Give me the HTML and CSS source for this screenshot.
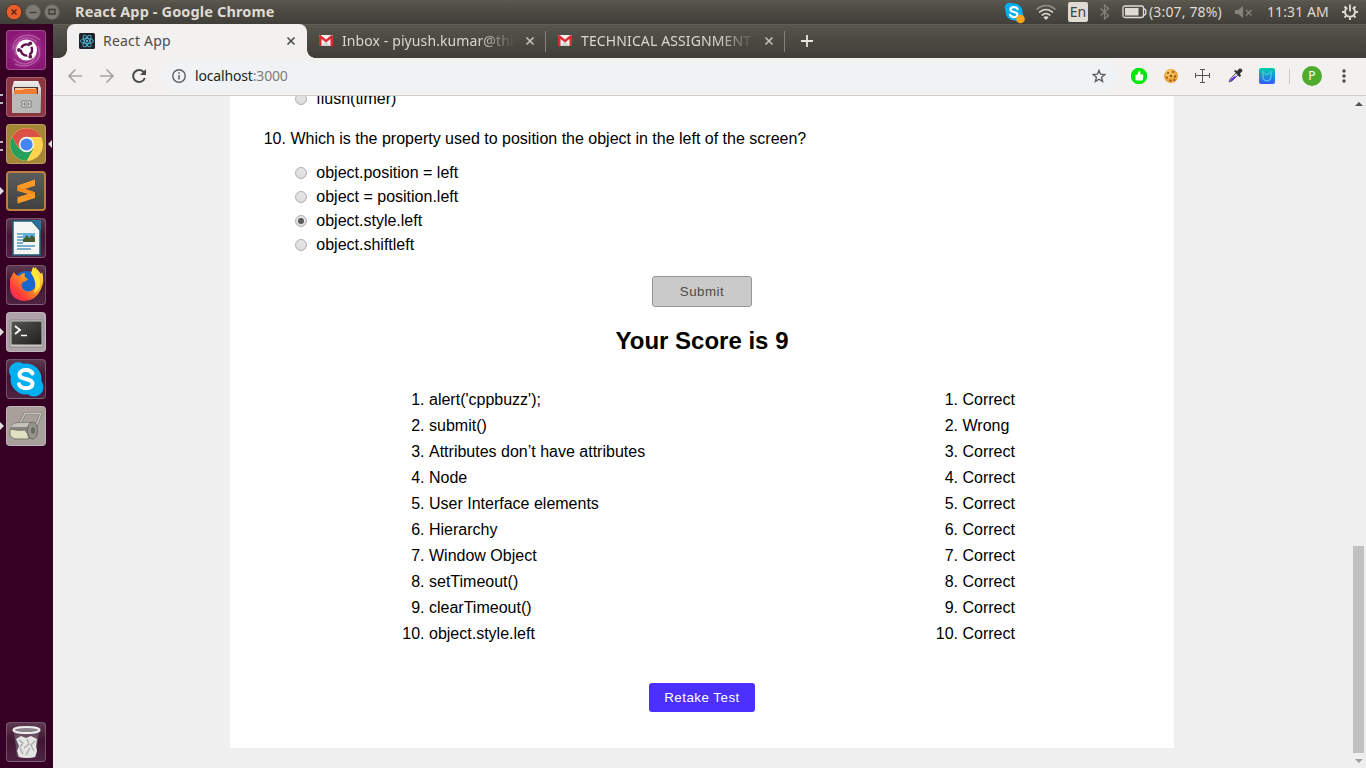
FILE: index.html
```html
<!DOCTYPE html>
<html lang="en">
<head>
<meta charset="utf-8">
<title>React App</title>
<link rel="stylesheet" href="styles.css">
</head>
<body>
<svg width="0" height="0" class="defs">
  <defs>
    <linearGradient id="metal" x1="0" y1="0" x2="0" y2="1"><stop offset="0" stop-color="#efefed"/><stop offset="1" stop-color="#8e8e8b"/></linearGradient>
    <linearGradient id="screen" x1="0" y1="0" x2="1" y2="1"><stop offset="0" stop-color="#555552"/><stop offset="1" stop-color="#1f1f1e"/></linearGradient>
    <linearGradient id="fox" x1="1" y1="0" x2="0" y2="1"><stop offset="0" stop-color="#fff14a"/><stop offset=".4" stop-color="#ffa31f"/><stop offset=".75" stop-color="#ff3b3c"/><stop offset="1" stop-color="#e5236b"/></linearGradient>
    <linearGradient id="mug" x1="0" y1="0" x2="0" y2="1"><stop offset="0" stop-color="#00d0a8"/><stop offset="1" stop-color="#3a58ff"/></linearGradient>
    <symbol id="gmail" viewBox="0 0 14 12"><path fill="#f0eeee" d="M0 0h14v11H0z"/><path fill="#d5d2d2" d="M3 11 7 6l4 5z"/><path fill="#d92b30" d="M0 1Q0 0 1.500 0L7 4.500 12.500 0Q14 0 14 1v10h-2.500V4L7 7.600 2.500 4v7H0z"/></symbol>
    <symbol id="cross" viewBox="0 0 10 10"><path d="M1.500 1.500l7 7M8.500 1.500l-7 7" stroke="currentColor" stroke-width="1.600" fill="none"/></symbol>
    <symbol id="skype" viewBox="0 0 40 40"><circle cx="12" cy="12" r="9" fill="#00aff0"/><circle cx="28" cy="28" r="9.500" fill="#00aff0"/><circle cx="20" cy="20" r="15.500" fill="#00aff0"/><path d="M26.500 14.500C24 9.500 13.500 10 13.500 15.500c0 6 13 3 13 9.300 0 5.700-11.500 6-13.500 .4" fill="none" stroke="#fff" stroke-width="4" stroke-linecap="round"/></symbol>
  </defs>
</svg>

<div class="panel">
  <div class="winbtns">
    <svg width="18" height="18" viewBox="0 0 18 18"><circle cx="9" cy="9" r="7.800" fill="#e9602d" stroke="#51332a"/><path d="M6.500 6.500l5 5m0-5-5 5" stroke="#5c2716" stroke-width="1.500"/></svg>
    <svg width="18" height="18" viewBox="0 0 18 18"><circle cx="9" cy="9" r="7.500" fill="#7c7a73" stroke="#5f5d56"/><path d="M5.500 9.500h7" stroke="#3d3c36" stroke-width="1.300"/></svg>
    <svg width="18" height="18" viewBox="0 0 18 18"><circle cx="9" cy="9" r="7.500" fill="#7c7a73" stroke="#5f5d56"/><path d="M6 6.500h6v4.500H6z" fill="none" stroke="#3d3c36" stroke-width="1.300"/></svg>
  </div>
  <div class="wintitle">React App - Google Chrome</div>
  <div class="indicators">
    <svg class="i-skype" width="22" height="24" viewBox="0 0 22 24"><use href="#skype" x="0" y="1" width="22" height="22"/><circle cx="17.500" cy="19" r="4.300" fill="#fba51a"/></svg>
    <svg class="i-wifi" width="22" height="18" viewBox="0 0 22 18" fill="none" stroke-width="1.600"><path d="M1.500 6.500Q11-1.500 20.500 6.500" stroke="#96928a"/><path d="M4 9.500Q11 3.500 18 9.500M6.700 12.500Q11 8.500 15.300 12.500" stroke="#dfdbd2"/><path d="M8.300 14.200Q11 12.300 13.700 14.200L11 17z" fill="#dfdbd2"/></svg>
    <span class="i-lang">En</span>
    <svg class="i-bt" width="11" height="16" viewBox="0 0 11 16"><path d="M1.500 4.500l8 7-4 3.500V1l4 3.500-8 7" fill="none" stroke="#85827a" stroke-width="1.300"/></svg>
    <svg class="i-batt" width="25" height="14" viewBox="0 0 25 14"><rect x="1" y="1" width="20.500" height="11.500" rx="2" fill="none" stroke="#dfdbd2" stroke-width="1.300"/><path fill="#dfdbd2" d="M3 3h13.500v7.500H3z"/><path d="M22 4q2 0 2 3t-2 3" fill="none" stroke="#dfdbd2" stroke-width="1.300"/></svg>
    <span class="i-charge">(3:07, 78%)</span>
    <svg class="i-vol" width="18" height="12" viewBox="0 0 18 12"><path d="M0 4h3l5-4v12L3 8H0z" fill="#85827a"/><path d="M11 4l5.500 5.500m0-5.500L11 9.500" stroke="#85827a" stroke-width="1.400"/></svg>
    <span class="i-clock">11:31 AM</span>
    <svg class="i-gear" width="18" height="18" viewBox="0 0 18 18" fill="none" stroke="#dfdbd2"><path d="M6.300 4.600a5 5 0 1 0 5.400 0" stroke-width="1.900"/><path d="M9 1.500v7" stroke-width="1.800"/><path d="M14.500 9h2.500M1 9h2.500M9 14.500V17M12.900 12.900l1.600 1.600M5.100 12.900l-1.600 1.600M13 5l1.500-1.500M5 5 3.500 3.500" stroke-width="2"/></svg>
  </div>
</div>

<div class="desktop">
  <div class="launcher">
    <div class="tile dash"><svg viewBox="0 0 40 40"><g fill="none" stroke="#cf8cc6" stroke-width="1.500" opacity=".5"><path d="M7 20C6 5 25 1 34 10M32 16c6 14-8 24-23 18M10 25C5 12 19 2 31 12M30 24c-2 11-14 13-22 5"/></g><circle cx="20.500" cy="20" r="10.500" fill="#fff"/><circle cx="20.500" cy="20" r="5.600" fill="none" stroke="#631454" stroke-width="2.400" stroke-dasharray="9.700 2" stroke-dashoffset="4"/><g fill="#631454"><circle cx="12.900" cy="20" r="1.900"/><circle cx="24.300" cy="13.300" r="1.900"/><circle cx="24.300" cy="26.700" r="1.900"/></g></svg></div>
    <div class="tile files two"><svg viewBox="0 0 40 40"><path d="M8 4h24l3 7v24q0 1-1 1H7q-1 0-1-1V11z" fill="url(#metal)"/><path d="M8 10h24v8H8z" fill="#4d3630"/><path d="M9 11h21v2H9z" fill="#f6c899"/><path d="M8 13h9l1-1h13v5H8z" fill="#f17d32"/><path d="M6 17h28v19H6z" fill="#b9b9b7"/><path d="M16 24h9v6h-9z" fill="#eee" stroke="#777" stroke-width="1"/><path d="M18 26h5v2h-5z" fill="none" stroke="#666"/></svg></div>
    <div class="tile chrome two active"><svg viewBox="0 0 40 40"><circle cx="20.500" cy="20.500" r="16.500" fill="#ffd34b"/><path d="M6 13A16.500 16.500 0 0 0 20.500 37l7-12.500H13z" fill="#26a05b"/><path d="M6 13A16.500 16.500 0 0 1 35.200 13H20.500L13.500 24.500z" fill="#dc5147"/><circle cx="20.500" cy="20.500" r="7.700" fill="#f4f4f4"/><circle cx="20.500" cy="20.500" r="6.100" fill="#4285f4"/></svg></div>
    <div class="tile sublime one"><svg viewBox="0 0 40 40"><path d="M11.500 14.500 29 8.500v6.200L18.500 18 29 21.300V27l-17.500 5.500v-6.200L22 23l-10.500-3.200z" fill="#ff9a25"/><path d="M11.500 19.800v-4.500L29 21.300V24z" fill="#f58d1b"/></svg></div>
    <div class="tile writer"><svg viewBox="0 0 40 40"><path d="M7 3h19l8 9v25H7z" fill="#f5f5f3" stroke="#20617e" stroke-width="1.500"/><path d="M25 2h10v10z" fill="#2e749a"/><path d="M11 16h6m-6 3h6m-6 3h6m-6 3h6m-6 3h18m-18 3h14" stroke="#5299c0" stroke-width="1.500"/><path d="M17 15h12v9H17z" fill="#62b1dc"/><path d="m17 22 4-5 2 3 3-3 3 3v4H17z" fill="#435c31"/></svg></div>
    <div class="tile firefox"><svg viewBox="0 0 40 40"><circle cx="20.500" cy="20" r="14" fill="#1667ce"/><path d="M4 14q2-4 4-7 2 4 5 4 3-3 6-3-2 4 3 6-2 3-5 3-3 3 0 7 5 5 11 0 5-7-1-16l2-6q4 4 6 7l1-2q3 9-1 17-5 12-17 12Q5 35 4 23z" fill="url(#fox)"/><path d="M25 8l2-6q4 3 5 7 6 14-4 19 4-10-3-20z" fill="#ffe63a"/></svg></div>
    <div class="tile terminal one"><svg viewBox="0 0 40 40"><path d="M4 8h33v27H4z" fill="#c9c8c5" stroke="#8d8b88"/><path d="M5.500 9.500h30v23h-30z" fill="url(#screen)"/><path d="m9 14 5 4-5 4" fill="none" stroke="#fff" stroke-width="1.800"/><path d="M15 23.500h6" stroke="#fff" stroke-width="1.500"/></svg></div>
    <div class="tile skype"><svg viewBox="0 0 40 40"><use href="#skype" width="40" height="40"/></svg></div>
    <div class="tile usb one"><svg viewBox="0 0 40 40"><path d="M14 17 19 7.500h16L28 25" fill="none" stroke="#84837a" stroke-width="3.200" stroke-linejoin="round"/><path d="M14 17 19 7.500h16L28 25" fill="none" stroke="#c9c7bd" stroke-width="1.400" stroke-linejoin="round"/><path d="M4 23q1-6 8-7h15v17H10z" fill="#85857d"/><path d="M5 21q2-4 8-4h13v4H10z" fill="#c3c3bb"/><ellipse cx="26.500" cy="24.500" rx="5" ry="8.500" fill="#96968e" stroke="#686861"/><ellipse cx="27" cy="24.500" rx="2" ry="3.300" fill="#686861"/><path d="M4 23q8 2 15 1 3 3 4 9H9q-4-1-5-4z" fill="#dfe0c2" stroke="#77776a"/></svg></div>
    <div class="tile trash"><svg viewBox="0 0 40 40"><path d="M8 9h25l-3 26q-10 2-19 0z" fill="#776c78" opacity=".65"/><path d="m10 17 5-3 5 2 5-2 6 3-1 7 1 5-2 6q-8 2-16 0l-2-6 2-5z" fill="#e5e5e5"/><path d="m13 18 4 3-3 4m7-8 2 5-5 4m11-7-4 4 3 6m-14-3 3 6m7-6-4 7" fill="none" stroke="#aaa" stroke-width="1.300"/><ellipse cx="20.500" cy="8" rx="13" ry="3" fill="#8b818d" stroke="#eee" stroke-width="2"/></svg></div>
  </div>

  <div class="browser">
    <div class="tabs">
      <div class="tab current">
        <svg class="fav" width="16" height="16" viewBox="0 0 16 16"><rect width="16" height="16" rx="1.500" fill="#20232a"/><g fill="none" stroke="#4fb8d5" stroke-width=".9"><ellipse cx="8" cy="8" rx="6.500" ry="2.500"/><ellipse cx="8" cy="8" rx="6.500" ry="2.500" transform="rotate(60 8 8)"/><ellipse cx="8" cy="8" rx="6.500" ry="2.500" transform="rotate(120 8 8)"/></g><circle cx="8" cy="8" r="1.200" fill="#4fb8d5"/></svg>
        <span class="name">React App</span>
        <svg class="x" width="10" height="10"><use href="#cross"/></svg>
      </div>
      <div class="tab">
        <svg class="fav" width="14" height="12"><use href="#gmail"/></svg>
        <span class="name inbox">Inbox - piyush.kumar@thi</span>
        <svg class="x" width="10" height="10"><use href="#cross"/></svg>
      </div>
      <div class="tab second">
        <svg class="fav" width="14" height="12"><use href="#gmail"/></svg>
        <span class="name tech">TECHNICAL ASSIGNMENT_</span>
        <svg class="x" width="10" height="10"><use href="#cross"/></svg>
      </div>
      <svg class="plus" width="12" height="12" viewBox="0 0 12 12"><path d="M6 0v12M0 6h12" stroke="#e8e5de" stroke-width="1.800"/></svg>
    </div>
    <div class="toolbar">
      <svg class="nav" width="16" height="16" viewBox="0 0 16 16"><path d="M15 8H2m6.500-6.500L2 8l6.500 6.500" fill="none" stroke="#a5a4a2" stroke-width="1.700"/></svg>
      <svg class="nav" width="16" height="16" viewBox="0 0 16 16"><path d="M1 8h13M7.500 1.500 14 8l-6.500 6.500" fill="none" stroke="#a5a4a2" stroke-width="1.700"/></svg>
      <svg class="nav" width="16" height="16" viewBox="0 0 16 16"><path d="M13 4.500A6 6 0 1 0 13.800 10" fill="none" stroke="#4b4b4b" stroke-width="2"/><path d="M15 1v6H9z" fill="#4b4b4b"/></svg>
      <div class="omnibox">
        <svg width="14" height="14" viewBox="0 0 14 14"><circle cx="7" cy="7" r="6.200" fill="none" stroke="#5b5f63" stroke-width="1.400"/><path d="M7 6v4.500M7 3.300v1.500" stroke="#5b5f63" stroke-width="1.500"/></svg>
        <span class="url">localhost<span>:3000</span></span>
        <svg class="star" width="14" height="14" viewBox="0 0 14 14"><path d="M7 1.400 8.600 5.200l4.200.4-3.200 2.700 1 4.100L7 10.200 3.400 12.400l1-4.100L1.200 5.600l4.200-.4z" fill="none" stroke="#5b5f63" stroke-width="1.400"/></svg>
      </div>
      <div class="exts">
        <svg width="16" height="16" viewBox="0 0 16 16"><circle cx="8" cy="8" r="8.200" fill="#00e60b"/><path d="M4.500 7H6l2-4q2 0 1.200 3.200h2.600q1 1-.2 6.300H6L4.500 12z" fill="#fff"/></svg>
        <svg width="16" height="16" viewBox="0 0 16 16"><circle cx="8" cy="8" r="7" fill="#eaa139"/><circle cx="7" cy="6" r="4.500" fill="#f5be59"/><g fill="#86501e"><circle cx="5" cy="5" r="1"/><circle cx="10" cy="4" r="1"/><circle cx="8" cy="8" r="1.200"/><circle cx="4" cy="9.500" r="1"/><circle cx="12" cy="8.500" r="1.100"/><circle cx="7.500" cy="12.500" r="1.100"/><circle cx="11.500" cy="12" r=".9"/></g></svg>
        <svg width="16" height="16" viewBox="0 0 16 16"><path d="M7.500 1v14M.5 7.500h14M5 1.500h5M5 14.500h5M.5 5v5M14.500 5v5" stroke="#555" stroke-width="1"/></svg>
        <svg width="16" height="16" viewBox="0 0 16 16"><path d="m2 14 1-3 7-7 2 2-7 7z" fill="#d5ccff" stroke="#6f667c"/><path d="m3 13 1-2 4-3 1 1-4 4z" fill="#6131ec"/><path d="m7 3 1-1 2 1 2.500-2.500q3-.5 3 2.500L13 5.500l1 2.500-1.500 1z" fill="#333"/></svg>
        <svg width="16" height="16" viewBox="0 0 16 16"><rect width="16" height="16" rx="2" fill="url(#mug)"/><path d="M4 3v6.500q0 3 4 3.500 4-.5 4-3.500V3M6 4.500v1Q8 8 10 5.500v-1" fill="none" stroke="#5ae6ec" stroke-width=".9"/></svg>
      </div>
      <i class="sep"></i>
      <span class="avatar">P</span>
      <svg class="dots" width="4" height="14" viewBox="0 0 4 14" fill="#4b4b4b"><circle cx="2" cy="2" r="1.700"/><circle cx="2" cy="7" r="1.700"/><circle cx="2" cy="12" r="1.700"/></svg>
    </div>
    <div class="page">
      <main class="card">
        <div class="options clipped"><label><i class="radio"></i>flush(timer)</label></div>
        <p class="question">10. Which is the property used to position the object in the left of the screen?</p>
        <div class="options">
          <label><i class="radio"></i>object.position = left</label>
          <label><i class="radio"></i>object = position.left</label>
          <label><i class="radio on"></i>object.style.left</label>
          <label><i class="radio"></i>object.shiftleft</label>
        </div>
        <button class="submit">Submit</button>
        <h2>Your Score is 9</h2>
        <div class="results">
          <ol class="answers"><li>alert('cppbuzz');</li><li>submit()</li><li>Attributes don’t have attributes</li><li>Node</li><li>User Interface elements</li><li>Hierarchy</li><li>Window Object</li><li>setTimeout()</li><li>clearTimeout()</li><li>object.style.left</li></ol>
          <ol><li>Correct</li><li>Wrong</li><li>Correct</li><li>Correct</li><li>Correct</li><li>Correct</li><li>Correct</li><li>Correct</li><li>Correct</li><li>Correct</li></ol>
        </div>
        <button class="retake">Retake Test</button>
      </main>
      <div class="scroll"><i class="up"></i><i class="thumb"></i><i class="down"></i></div>
    </div>
  </div>
</div>
</body>
</html>
```
FILE: styles.css
```css
* { box-sizing: border-box; }
body { margin: 0; width: 1366px; height: 768px; overflow: hidden; font-family: "Liberation Sans", Arial, sans-serif; font-size: 16px; color: #000; }
svg { display: block; flex: none; }
.defs { position: absolute; }

.panel { height: 24px; display: flex; align-items: center; background: linear-gradient(#5d5b51, #55534a 12%, #3f3e38); color: #dfdbd2; font-family: "Noto Sans", sans-serif; }
.winbtns { display: flex; gap: 1px; padding-left: 5px; width: 75px; margin-top: -1px; }
.wintitle { font-weight: 700; font-size: 14.500px; letter-spacing: .13px; line-height: 20px; padding-bottom: 2px; white-space: nowrap; flex: 1; }
.indicators { display: flex; align-items: center; height: 24px; font-size: 14px; white-space: nowrap; width: 363px; }
.i-wifi { margin-left: 10px; }
.i-lang { width: 20px; height: 20px; margin-left: 11px; border-radius: 2px; background: #dfdbd2; color: #45443e; font-size: 14px; line-height: 20px; text-align: center; }
.i-bt { margin-left: 11px; }
.i-batt { margin-left: 12px; }
.i-charge { width: 73px; margin-left: 2px; letter-spacing: .15px; padding-bottom: 2px; }
.i-vol { margin-left: 13px; }
.i-clock { width: 62px; margin-left: 14px; padding-bottom: 2px; letter-spacing: .1px; }
.i-gear { margin-left: 12px; }

.desktop { display: flex; height: 744px; }
.launcher { width: 53px; padding: 6px; background: #350023; display: flex; flex-direction: column; gap: 7px; flex: none; }
.tile { position: relative; width: 40px; height: 40px; border-radius: 4px; border: 1px solid rgba(255,255,255,.22); background: linear-gradient(#5c3951, #421632 45%, #4e2342); flex: none; }
.tile svg { width: 40px; height: 40px; margin: -1px; }
.dash { background: radial-gradient(#b549a4, #8a1674 75%); }
.files { background: #8c3641; }
.chrome { background: #a68638; }
.sublime { background: linear-gradient(#5c5c5c, #414141); border: 2px solid #bd7f3e; }
.sublime svg { margin: -2px; }
.terminal { background: #aea1aa; }
.usb { background: #a9a09b; }
.trash { margin-top: auto; }
.one::before { content: ""; position: absolute; left: -7px; top: 15px; border: 4px solid transparent; border-left-color: #ddd; border-right: 0; }
.sublime.one::before { left: -8px; top: 14px; }
.two::before { content: ""; position: absolute; left: -7px; top: 16px; width: 3px; height: 6px; border: solid #bbb; border-width: 2px 0; }
.active::after { content: ""; position: absolute; right: -7px; top: 15px; border: 4px solid transparent; border-right-color: #ddd; border-left: 0; }

.browser { flex: 1; min-width: 0; display: flex; flex-direction: column; }
.tabs { height: 34px; display: flex; align-items: center; padding-left: 14px; background: linear-gradient(#6a675a, #56554c 4%, #3e3d37); font-family: "Noto Sans", sans-serif; font-size: 14px; color: #dad7cf; }
.tab { height: 34px; display: flex; align-items: center; width: 239px; padding: 0 11px 0 12px; position: relative; }
.tab.current { width: 240px; background: #f2f1f0; color: #4c4c4c; border-radius: 8px 8px 0 0; }
.tab.current::before, .tab.current::after { content: ""; position: absolute; bottom: 0; width: 8px; height: 8px; }
.tab.current::before { left: -8px; background: radial-gradient(circle at 0 0, transparent 7.500px, #f2f1f0 8px); }
.tab.current::after { right: -8px; background: radial-gradient(circle at 100% 0, transparent 7.500px, #f2f1f0 8px); }
.tab:not(.current)::after { content: ""; position: absolute; right: 0; top: 7px; width: 1px; height: 21px; background: #858278; }
.tab .name { margin-left: 8px; flex: 1; white-space: nowrap; overflow: hidden; padding-bottom: 2px; letter-spacing: .2px; }
.inbox, .tech { -webkit-mask-image: linear-gradient(90deg, #000 78%, transparent); mask-image: linear-gradient(90deg, #000 78%, transparent); }
.tab .x { margin-left: 9px; color: #c5c2b9; }
.tab .inbox { margin-left: 9px; letter-spacing: .1px; }
.tab .tech { margin-left: 9px; letter-spacing: .12px; }
.tab.current .x { color: #4c4c4c; }
.plus { margin-left: 16px; }

.toolbar { height: 38px; flex: none; display: flex; align-items: center; padding: 0 0 1px 14px; background: #f2f1f0; border-bottom: 1px solid #cfcecc; font-family: "Noto Sans", sans-serif; }
.nav { margin-right: 16px; }
.omnibox { width: 956px; height: 28px; margin-left: -2px; display: flex; align-items: center; border-radius: 14px; background: #eff3f5; padding: 0 11px 0 11px; }
.url { margin-left: 9px; font-size: 14px; letter-spacing: -.16px; flex: 1; color: #222; padding-bottom: 1px; }
.url span { color: #7b7e80; }
.exts { display: flex; gap: 16px; margin-left: 14px; }
.sep { width: 1px; height: 15px; background: #cbcac8; margin-left: 14px; }
.avatar { width: 20px; height: 20px; border-radius: 50%; background: #4dab2e; color: #fff; font-size: 12px; line-height: 20px; text-align: center; margin-left: 12px; }
.dots { margin-left: 20px; }

.page { flex: 1; min-height: 0; display: flex; background: #efefef; overflow: hidden; }
.card { width: 944px; height: 652px; margin-left: 177px; background: #fff; display: flex; flex-direction: column; overflow: hidden; flex: none; }
.options { padding-left: 65px; display: flex; flex-direction: column; }
.options label { height: 24px; line-height: 24px; display: flex; align-items: center; }
.clipped { margin-top: -9px; }
.radio { width: 12px; height: 12px; border-radius: 50%; border: 1px solid #adadad; background: linear-gradient(#e6e6e6, #dcdcdc); margin-right: 9.300px; display: flex; align-items: center; justify-content: center; }
.radio.on::after { content: ""; width: 6px; height: 6px; border-radius: 50%; background: #5a5a5a; }
.question { margin: 18px 0 12px 33.700px; line-height: 20px; }
button { align-self: center; padding: 0; font-family: "Liberation Sans", Arial, sans-serif; font-size: 13.333px; letter-spacing: .5px; border-radius: 3px; flex: none; }
.submit { width: 100px; height: 31px; margin-top: 19px; background: #cacaca; border: 1px solid #969696; color: #4c4c4c; }
h2 { margin: 20px 0 0; font-size: 24px; line-height: 28px; text-align: center; }
.results { display: flex; margin-top: 32px; padding-left: 199px; line-height: 26px; }
ol { margin: 0; padding: 0; }
.answers { width: 533.500px; }
.retake { width: 106px; height: 29px; margin-top: 36px; background: #4b30ff; border: 0; color: #fff; }
.scroll { width: 15px; margin-left: auto; padding: 6px 2px 5px 2px; display: flex; flex-direction: column; align-items: center; }
.up { border: 4px solid transparent; border-bottom-color: #505050; border-top: 0; }
.thumb { width: 11px; height: 207px; margin-top: auto; background: #c1c1c1; }
.down { border: 4px solid transparent; border-top-color: #a0a0a0; border-bottom: 0; margin-top: 6px; }
```
